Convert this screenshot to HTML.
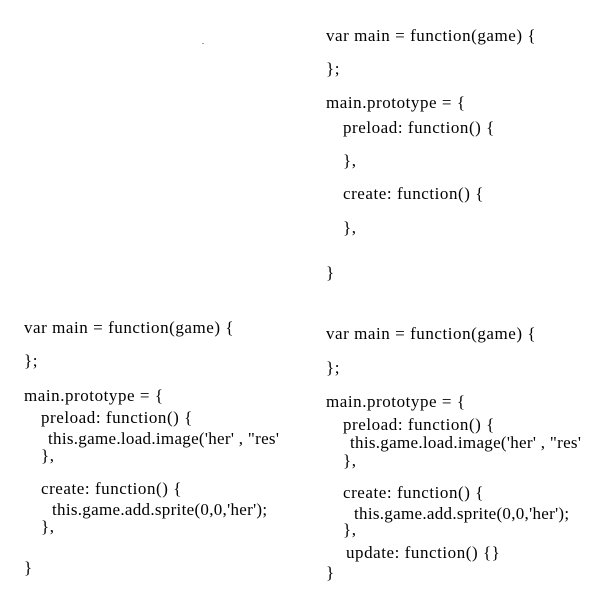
<!DOCTYPE html>
<html><head><style>
body{margin:0;width:600px;height:600px;background:#fff;position:relative;overflow:hidden;font-family:"Liberation Serif",serif;font-size:17px;letter-spacing:0.55px;color:#000;}
div{position:absolute;line-height:20px;white-space:pre;}
</style></head><body>
<div style="left:202px;top:32px;font-size:8px">.</div>
<div style="left:326px;top:26px">var main = function(game) {</div>
<div style="left:326px;top:59px">};</div>
<div style="left:326px;top:93px">main.prototype = {</div>
<div style="left:343px;top:118px">preload: function() {</div>
<div style="left:343px;top:151px">},</div>
<div style="left:343px;top:184px">create: function() {</div>
<div style="left:343px;top:218px">},</div>
<div style="left:326px;top:263px">}</div>

<div style="left:24px;top:318px">var main = function(game) {</div>
<div style="left:24px;top:351px">};</div>
<div style="left:24px;top:386px">main.prototype = {</div>
<div style="left:41px;top:408px">preload: function() {</div>
<div style="left:48px;top:429px;letter-spacing:0.3px">this.game.load.image('her' , "res'</div>
<div style="left:41px;top:446px">},</div>
<div style="left:41px;top:479px">create: function() {</div>
<div style="left:52px;top:500px;letter-spacing:0.3px">this.game.add.sprite(0,0,'her');</div>
<div style="left:41px;top:517px">},</div>
<div style="left:24px;top:558px">}</div>

<div style="left:326px;top:324px">var main = function(game) {</div>
<div style="left:326px;top:358px">};</div>
<div style="left:326px;top:392px">main.prototype = {</div>
<div style="left:343px;top:415px">preload: function() {</div>
<div style="left:350px;top:433px;letter-spacing:0.3px">this.game.load.image('her' , "res'</div>
<div style="left:343px;top:451px">},</div>
<div style="left:343px;top:483px">create: function() {</div>
<div style="left:354px;top:504px;letter-spacing:0.3px">this.game.add.sprite(0,0,'her');</div>
<div style="left:343px;top:520px">},</div>
<div style="left:346px;top:543px">update: function() {}</div>
<div style="left:326px;top:563px">}</div>
</body></html>
